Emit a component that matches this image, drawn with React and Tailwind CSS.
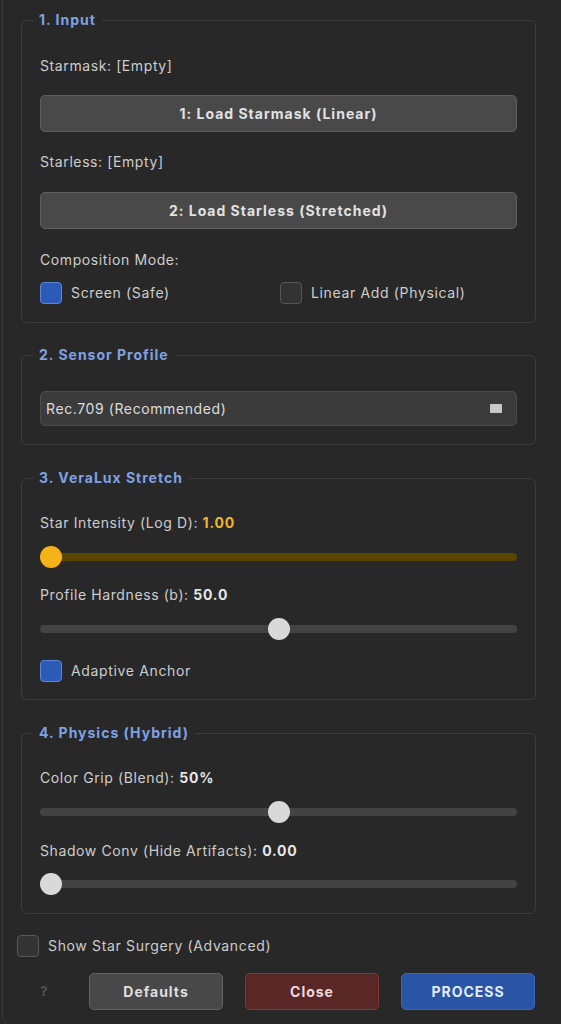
import React from 'react';

const font = { fontFamily: 'Inter, "Noto Sans", sans-serif' };

const Group = ({ title, children, className = '' }) => (
  <fieldset className={`border border-[#3d3d3d] rounded-[6px] px-[18px] ${className}`}>
    <legend className="-ml-[7px] px-[6px] text-[14px] leading-[18px] font-bold tracking-[1px] text-[#7fa2e4]">{title}</legend>
    {children}
  </fieldset>
);

const Label = ({ text, value, amber, className = '' }) => (
  <div className={`text-[14px] leading-[18px] tracking-[0.6px] text-[#cdcdcd] ${className}`}>
    {text}{' '}
    <span className={`font-bold tracking-[0.8px] ${amber ? 'text-[#f2b42a]' : 'text-[#e6e6e6]'}`}>{value}</span>
  </div>
);

const Check = ({ checked, label, className = '' }) => (
  <div className={`flex items-center gap-[9px] ${className}`}>
    <div
      className={`w-[22px] h-[22px] rounded-[4px] border ${
        checked ? 'bg-[#2b5bb6] border-[#5b87d8]' : 'bg-[#333333] border-[#575757]'
      }`}
    />
    <span className="text-[14px] leading-[18px] tracking-[0.65px] text-[#cdcdcd]">{label}</span>
  </div>
);

const Slider = ({ pct, amber, className = '' }) => (
  <div className={`relative h-[22px] flex items-center ${className}`}>
    <div className={`w-full h-[8px] rounded-full ${amber ? 'bg-[#5a4400]' : 'bg-[#434343]'}`} />
    <div
      className={`absolute top-0 w-[22px] h-[22px] rounded-full ${amber ? 'bg-[#f6b317]' : 'bg-[#d9d9d9]'}`}
      style={{ left: `calc((100% - 22px) * ${pct / 100})` }}
    />
  </div>
);

const LoadButton = ({ children, className = '' }) => (
  <div
    className={`h-[37px] flex items-center justify-center rounded-[5px] bg-[#494949] border border-[#5e5e5e] text-[14px] font-bold tracking-[1px] text-[#e2e2e2] ${className}`}
  >
    {children}
  </div>
);

export default function App() {
  return (
    <div className="w-[561px] h-[1024px] bg-[#282828] overflow-hidden" style={font}>
      <div className="ml-[2px] h-full border-l border-[#3a3a3a] rounded-bl-[8px] pl-[18px] pr-[25px] pt-[11px]">
        <Group title="1. Input" className="pb-[18px]">
          <div className="mt-[28px] text-[14px] leading-[18px] tracking-[0.6px] text-[#cdcdcd]">Starmask: [Empty]</div>
          <LoadButton className="mt-[20px]">1: Load Starmask (Linear)</LoadButton>
          <div className="mt-[21px] text-[14px] leading-[18px] tracking-[0.6px] text-[#cdcdcd]">Starless: [Empty]</div>
          <LoadButton className="mt-[21px]">2: Load Starless (Stretched)</LoadButton>
          <div className="mt-[22px] text-[14px] leading-[18px] tracking-[0.6px] text-[#cdcdcd]">Composition Mode:</div>
          <div className="mt-[13px] flex">
            <Check checked label="Screen (Safe)" className="w-[240px]" />
            <Check label="Linear Add (Physical)" />
          </div>
        </Group>

        <Group title="2. Sensor Profile" className="mt-[23px] pb-[18px]">
          <div className="mt-[27px] h-[35px] flex items-center justify-between pl-[5px] pr-[14px] rounded-[5px] bg-[#3b3b3b] border border-[#4b4b4b]">
            <span className="text-[14px] tracking-[0.6px] text-[#dcdcdc]">Rec.709 (Recommended)</span>
            <span className="w-[12px] h-[9px] bg-[#c9c9c9] rounded-[1px]" />
          </div>
        </Group>

        <Group title="3. VeraLux Stretch" className="mt-[24px] pb-[17px]">
          <Label text="Star Intensity (Log D):" value="1.00" amber className="mt-[27px]" />
          <Slider pct={0} amber className="mt-[14px]" />
          <Label text="Profile Hardness (b):" value="50.0" className="mt-[18px]" />
          <Slider pct={50} className="mt-[14px]" />
          <Check checked label="Adaptive Anchor" className="mt-[20px]" />
        </Group>

        <Group title="4. Physics (Hybrid)" className="mt-[24px] pb-[18px]">
          <Label text="Color Grip (Blend):" value="50%" className="mt-[27px]" />
          <Slider pct={50} className="mt-[14px]" />
          <Label text="Shadow Conv (Hide Artifacts):" value="0.00" className="mt-[19px]" />
          <Slider pct={0} className="mt-[13px]" />
        </Group>

        <Check label="Show Star Surgery (Advanced)" className="mt-[21px] -ml-[4px]" />

        <div className="mt-[16px] flex gap-[22px] items-center">
          <div className="w-[46px] text-center text-[13px] font-bold text-[#555555]">?</div>
          <div className="w-[134px] h-[37px] flex items-center justify-center rounded-[5px] bg-[#484848] border border-[#616161] text-[14px] font-bold tracking-[1px] text-[#dedede]">
            Defaults
          </div>
          <div className="w-[134px] h-[37px] flex items-center justify-center rounded-[5px] bg-[#5a2727] border border-[#7c3b3b] text-[14px] font-bold tracking-[1px] text-[#efdada]">
            Close
          </div>
          <div className="w-[134px] h-[37px] flex items-center justify-center rounded-[5px] bg-[#2a55a6] border border-[#3a66ba] text-[14px] font-bold tracking-[1px] text-[#e4ebf8]">
            PROCESS
          </div>
        </div>
      </div>
    </div>
  );
}
